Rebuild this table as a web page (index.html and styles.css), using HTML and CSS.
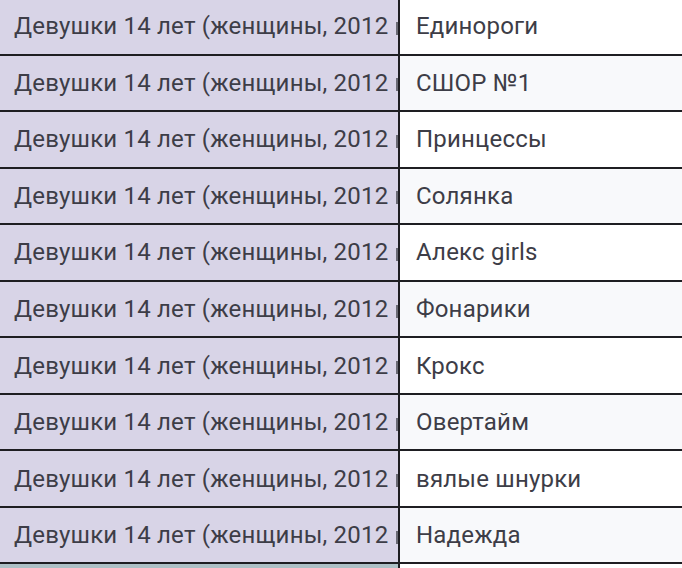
FILE: index.html
```html
<!DOCTYPE html>
<html lang="ru">
<head>
<meta charset="utf-8">
<link rel="stylesheet" href="styles.css">
</head>
<body>
<div class="table">
  <div class="row"><div class="cat">Девушки 14 лет (женщины, 2012</div><div class="team">Единороги</div></div>
  <div class="row alt"><div class="cat">Девушки 14 лет (женщины, 2012</div><div class="team">СШОР №1</div></div>
  <div class="row"><div class="cat">Девушки 14 лет (женщины, 2012</div><div class="team">Принцессы</div></div>
  <div class="row alt"><div class="cat">Девушки 14 лет (женщины, 2012</div><div class="team">Солянка</div></div>
  <div class="row"><div class="cat">Девушки 14 лет (женщины, 2012</div><div class="team">Алекс girls</div></div>
  <div class="row alt"><div class="cat">Девушки 14 лет (женщины, 2012</div><div class="team">Фонарики</div></div>
  <div class="row"><div class="cat">Девушки 14 лет (женщины, 2012</div><div class="team">Крокс</div></div>
  <div class="row alt"><div class="cat">Девушки 14 лет (женщины, 2012</div><div class="team">Овертайм</div></div>
  <div class="row"><div class="cat">Девушки 14 лет (женщины, 2012</div><div class="team">вялые шнурки</div></div>
  <div class="row alt"><div class="cat">Девушки 14 лет (женщины, 2012</div><div class="team">Надежда</div></div>
  <div class="row next"><div class="cat empty"></div><div class="team"></div></div>
</div>
</body>
</html>
```
FILE: styles.css
```css
html, body {
  margin: 0;
  padding: 0;
  background: #ffffff;
  overflow: hidden;
}
.table {
  margin-top: -1px;
  display: flex;
  flex-direction: column;
  font-family: Roboto, "Noto Sans", sans-serif;
  font-size: 24px;
  letter-spacing: 0.2px;
  color: #3d3d47;
}
.row {
  display: flex;
  height: 56.56px;
  flex: none;
  box-sizing: border-box;
  border-bottom: 2px solid #1e1e22;
}
.cat {
  width: 400px;
  flex: none;
  box-sizing: border-box;
  padding-left: 14px;
  background: #d8d4e7;
  border-right: 2px solid #1e1e22;
  white-space: nowrap;
  overflow: hidden;
  display: flex;
  align-items: center;
}
.cat::after {
  content: "";
  width: 2px;
  height: 13px;
  margin-left: auto;
  margin-right: 0;
  margin-top: 4px;
  background: #6a6a74;
}
.cat.empty::after {
  display: none;
}
.team {
  flex: 1;
  padding-left: 16px;
  display: flex;
  align-items: center;
  background: #ffffff;
}
.alt .team {
  background: #f8f9fb;
}
.next .cat {
  background: #adc0c6;
}
```
